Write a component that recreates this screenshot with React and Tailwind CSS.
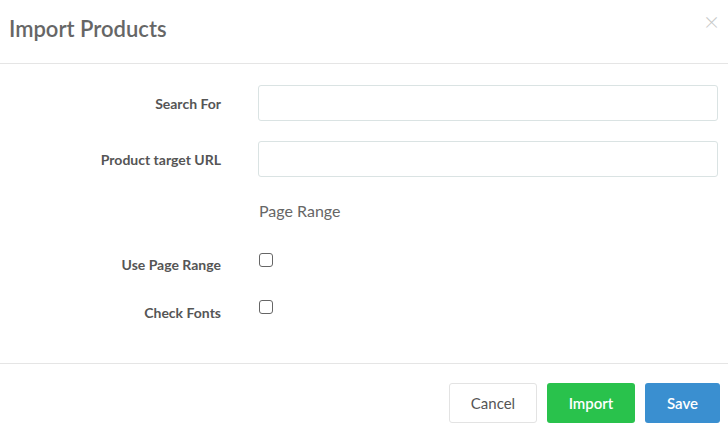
import React from "react";

export default function App() {
  return (
    <div className="w-[728px] h-[434px] bg-white text-[#555] font-['Lato','Noto_Sans',sans-serif] overflow-hidden">
      <div className="h-[64px] border-b border-[#e5e5e5] flex items-start justify-between pl-[9px] pr-[9px]">
        <h4 className="mt-[14px] text-[22px] leading-[30px] font-semibold text-[#666]">Import Products</h4>
        <button className="mt-[8px] text-[26px] leading-[26px] text-[#c8c8c8] font-light">×</button>
      </div>
      <div className="pt-[21px] h-[300px] border-b border-[#e5e5e5]">
        <div className="flex items-center h-[36px]">
          <label className="w-[221px] text-right text-[14px] font-bold text-[#555]">Search For</label>
          <input className="ml-[37px] w-[460px] h-[36px] border border-[#dae3e3] rounded-[3px] outline-none" />
        </div>
        <div className="flex items-center h-[36px] mt-[20px]">
          <label className="w-[221px] text-right text-[14px] font-bold text-[#555]">Product target URL</label>
          <input className="ml-[37px] w-[460px] h-[36px] border border-[#dae3e3] rounded-[3px] outline-none" />
        </div>
        <div className="mt-[22px] pl-[259px] text-[16px] leading-[24px] text-[#666]">Page Range</div>
        <div className="flex items-start h-[48px] mt-[18px]">
          <label className="w-[221px] text-right text-[14px] font-bold text-[#555] leading-[20px] mt-[14px]">Use Page Range</label>
          <span className="ml-[38px] mt-[12px] w-[14px] h-[14px] border border-[#666] rounded-[3px] bg-white"></span>
        </div>
        <div className="flex items-start h-[48px]">
          <label className="w-[221px] text-right text-[14px] font-bold text-[#555] leading-[20px] mt-[14px]">Check Fonts</label>
          <span className="ml-[38px] mt-[11px] w-[14px] h-[14px] border border-[#666] rounded-[3px] bg-white"></span>
        </div>
      </div>
      <div className="flex justify-end gap-[10px] pt-[19px] pr-[8px]">
        <button className="w-[88px] h-[40px] border border-[#e3e3e3] rounded-[3px] bg-white text-[15px] text-[#555]">Cancel</button>
        <button className="w-[88px] h-[40px] rounded-[3px] bg-[#29c24c] text-[15px] font-semibold text-white">Import</button>
        <button className="w-[75px] h-[40px] rounded-[3px] bg-[#3a8fd0] text-[15px] font-semibold text-white">Save</button>
      </div>
    </div>
  );
}
